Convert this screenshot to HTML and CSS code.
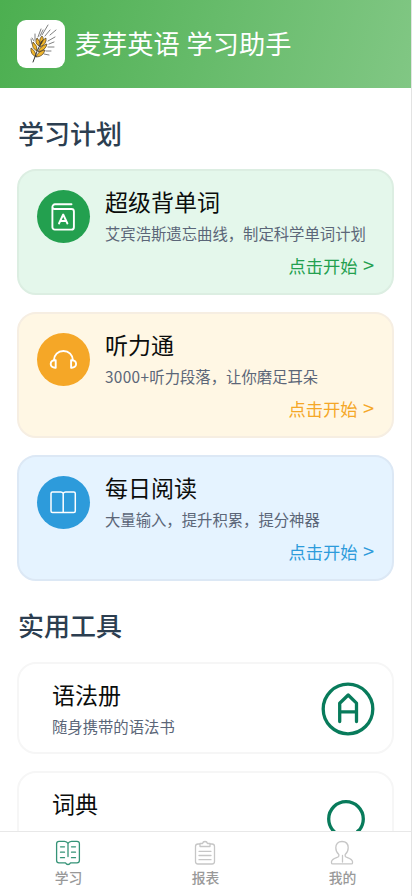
FILE: index.html
```html
<!DOCTYPE html>
<html lang="zh-CN">
<head>
<meta charset="utf-8">
<meta name="viewport" content="width=device-width, initial-scale=1">
<title>麦芽英语 学习助手</title>
<link rel="stylesheet" href="styles.css">
</head>
<body>
<div class="app">
  <header class="header">
    <div class="logo">
      <svg viewBox="0 0 48 48" width="48" height="48">
        <g stroke="#3a3a3a" stroke-width=".65" fill="none" stroke-linecap="round">
          <path d="M25 15l6-10M21 17l3-8M28 16l5-6M33 15l6-5M31 21l7-4M32 24l5-2M31 27l6 0M29 31l5 0M27 34l5 1M15 24l-1-5M18 20l0-6M17 21l-2-3M23 16l3-6"/>
        </g>
        <g fill="#f0b52c" stroke="#4a3a1c" stroke-width=".7">
          <path d="M25 16q3 3-1 8q-3-4 1-8zM20 18q4 3 2 8q-5-3-2-8zM16 22q5 4 4 9q-6-3-4-9zM14 28q5 3 5 9q-6-3-5-9zM29 18q1 6-6 9q0-6 6-9zM30 24q-1 6-9 8q2-6 9-8zM28 30q-2 7-9 7q2-6 9-7z"/>
        </g>
        <path d="M25 21q-5 9-9 21" fill="none" stroke="#333" stroke-width="1" stroke-linecap="round"/>
      </svg>
    </div>
    <h1 class="brand">麦芽英语 学习助手</h1>
  </header>

  <main class="content">
    <h2 class="section">学习计划</h2>
    <section class="plan plan-green">
      <div class="badge">
        <svg viewBox="0 0 53 53" width="53" height="53">
          <path d="M34.500 14.300H18a2.600 2.600 0 0 0-2.600 2.600v20.300a2.400 2.400 0 0 0 2.400 2.400h16.700a2.400 2.400 0 0 0 2.400-2.400V21.400a2.400 2.400 0 0 0-2.400-2.400H17.700a2.200 2.200 0 0 1-2.300-2.100M22 33.500l4.200-9 4.200 9M23.400 31h5.500"/>
        </svg>
      </div>
      <div class="info">
        <h3>超级背单词</h3>
        <p>艾宾浩斯遗忘曲线，制定科学单词计划</p>
        <span class="start">点击开始 <span class="arrow">&gt;</span></span>
      </div>
    </section>
    <section class="plan plan-amber">
      <div class="badge">
        <svg viewBox="0 0 53 53" width="53" height="53">
          <path d="M16.800 27.500C17 21.700 21 18 26.400 18s9.400 3.700 9.600 9.500M18.700 27.200v7.500c-3 .3-5-1.400-5-3.700s2-4.200 5-3.800zM34.100 27.200v7.500c3 .3 5-1.400 5-3.700s-2-4.200-5-3.800z"/>
        </svg>
      </div>
      <div class="info">
        <h3>听力通</h3>
        <p><span class="count">3000+</span>听力段落，让你磨足耳朵</p>
        <span class="start">点击开始 <span class="arrow">&gt;</span></span>
      </div>
    </section>
    <section class="plan plan-blue">
      <div class="badge">
        <svg viewBox="0 0 53 53" width="53" height="53">
          <path class="fine" d="M26.200 17.500q-.8-1.500-2.400-1.500h-8.300q-1.500 0-1.500 1.500v17.400q0 1.500 1.500 1.500h21.300q1.500 0 1.500-1.500V17.500q0-1.500-1.500-1.500h-8.200q-1.600 0-2.400 1.500zv18.700"/>
        </svg>
      </div>
      <div class="info">
        <h3>每日阅读</h3>
        <p>大量输入，提升积累，提分神器</p>
        <span class="start">点击开始 <span class="arrow">&gt;</span></span>
      </div>
    </section>

    <h2 class="section section-tools">实用工具</h2>
    <section class="tool">
      <div>
        <h3>语法册</h3>
        <p>随身携带的语法书</p>
      </div>
      <svg class="tool-icon" viewBox="0 0 54 54" width="54" height="54">
        <circle cx="27" cy="27" r="24.800"/>
        <path d="M18.700 39.500V21.200L27.200 13l8.300 8.200v18.300M18.700 29.800h16.800"/>
      </svg>
    </section>
    <section class="tool">
      <div>
        <h3>词典</h3>
      </div>
      <svg class="tool-icon" viewBox="0 0 54 54" width="54" height="54">
        <circle cx="25" cy="28" r="17.300"/>
        <path d="M37 40l9 9"/>
      </svg>
    </section>
  </main>

  <nav class="tabs">
    <a class="tab active">
      <svg viewBox="0 0 26 26" width="26" height="26">
        <path d="M13 3.500Q12 1.300 9.500 1.300H4Q1.600 1.300 1.600 3.800V20.500Q1.600 22.800 4 22.800H10.500Q11.500 24.500 13 24.500T15.500 22.800H22Q24.400 22.800 24.400 20.500V3.800Q24.400 1.300 22 1.300H16.500Q14 1.300 13 3.500V16.500M5.500 6.800h4M5.500 12.200h4M5.500 17.700h4M16.500 6.800h4M16.500 12.200h4M16.500 17.700h4"/>
      </svg>
      <span>学习</span>
    </a>
    <a class="tab">
      <svg viewBox="0 0 26 26" width="26" height="26">
        <path d="M8 4H6Q3.500 4 3.500 6.500V21.500Q3.500 24 6 24H20Q22.500 24 22.500 21.500V6.500Q22.500 4 20 4H18M8 6.500V3.500h2.500q.5-2 2.500-2t2.500 2H18v3zM7 11.300h12M7 15.500h12M7 19.700h12"/>
      </svg>
      <span>报表</span>
    </a>
    <a class="tab">
      <svg viewBox="0 0 26 26" width="26" height="26">
        <path d="M13 1.500c-4 0-6.200 2.700-6.200 6.300 0 3 1.200 5.200 3 6.700v1.700c0 1.500-6.800 1.500-7.300 5.500v1.200q0 1 1.200 1h18.600q1.200 0 1.200-1v-1.200c-.5-4-7.300-4-7.300-5.500v-1.700c1.800-1.500 3-3.700 3-6.700 0-3.600-2.200-6.300-6.200-6.300zM13.500 15.500v6.500"/>
      </svg>
      <span>我的</span>
    </a>
  </nav>
</div>
</body>
</html>
```

FILE: styles.css
```css
* { box-sizing: border-box; }

body {
  margin: 0;
  font-family: "Noto Sans CJK SC", sans-serif;
  background: #fff;
}

h1, h2, h3, p { margin: 0; font-weight: 400; }

.app {
  display: flex;
  flex-direction: column;
  height: 896px;
  overflow: hidden;
  border-right: 1px solid #e3e3e3;
}

.header {
  display: flex;
  flex: none;
  align-items: center;
  gap: 10px;
  height: 88px;
  padding-left: 17px;
  background: linear-gradient(105deg, #4caf50, #66bb6a 50%, #81c784);
}

.logo {
  width: 48px;
  height: 48px;
  border-radius: 9px;
  background: #fff;
}

.brand {
  margin-top: -2px;
  font-size: 26.2px;
  line-height: 40px;
  word-spacing: 1px;
  color: #fff;
}

.content {
  flex: 1;
  min-height: 0;
  overflow: hidden;
  padding: 26px 17px 0;
}

.section {
  height: 39px;
  margin-bottom: 16px;
  padding-left: 1px;
  font-size: 26px;
  font-weight: 500;
  line-height: 38px;
  color: #2c3e50;
}

.section-tools { margin-top: 25px; margin-bottom: 17px; }

.plan {
  display: flex;
  gap: 15px;
  height: 126px;
  margin-bottom: 17px;
  padding: 18.500px 18px 0;
  border: 2px solid;
  border-radius: 19px;
}

.plan-green { color: #23a04f; background: #e4f7eb; border-color: #dceee2; }
.plan-amber { color: #f5a727; background: #fff7e4; border-color: #f6eee2; }
.plan-blue { color: #2d9bdb; background: #e5f3ff; border-color: #dce8f5; }

.badge {
  flex: none;
  width: 53px;
  height: 53px;
  border-radius: 50%;
  background: currentColor;
}

.badge svg {
  display: block;
  fill: none;
  stroke: #fff;
  stroke-width: 1.9;
  stroke-linecap: round;
  stroke-linejoin: round;
}

.badge .fine { stroke-width: 1.5; }

.info {
  display: flex;
  flex: 1;
  flex-direction: column;
  margin-top: -2.500px;
}

h3 {
  font-size: 23px;
  line-height: 28px;
  color: #0b0d0c;
}

p {
  margin-top: 6.500px;
  font-size: 15.35px;
  line-height: 23px;
  white-space: nowrap;
  color: #5b6678;
}

.count { letter-spacing: .35px; }

.start {
  align-self: flex-end;
  margin-top: 8px;
  font-size: 17.300px;
  line-height: 25px;
}

.arrow {
  display: inline-block;
  width: 12.500px;
  text-align: right;
  font-size: 20px;
  line-height: 20px;
}

.tool {
  display: flex;
  justify-content: space-between;
  height: 92px;
  margin-bottom: 17px;
  padding: 17px 17px 0 33px;
  border: 2px solid #f6f6f6;
  border-radius: 19px;
}

.tool h3 { margin-top: -1.500px; }
.tool p { margin-top: 7px; }

.tool-icon {
  flex: none;
  margin-top: 1px;
  fill: none;
  stroke: #087b5b;
  stroke-width: 3.3;
  stroke-linecap: round;
  stroke-linejoin: round;
}

.tabs {
  display: flex;
  flex: none;
  height: 65px;
  border-top: 1px solid #e8e8e8;
  background: #fff;
}

.tab {
  display: flex;
  flex: 1;
  flex-direction: column;
  align-items: center;
  padding-top: 7.500px;
  font-size: 13.800px;
  font-weight: 500;
  line-height: 20px;
  color: #999;
}

.tab svg {
  margin-bottom: 1.500px;
  margin-right: 1px;
  fill: none;
  stroke: #c6c6c6;
  stroke-width: 1.3;
  stroke-linecap: round;
  stroke-linejoin: round;
}

.tab.active svg { stroke: #359377; }
```
